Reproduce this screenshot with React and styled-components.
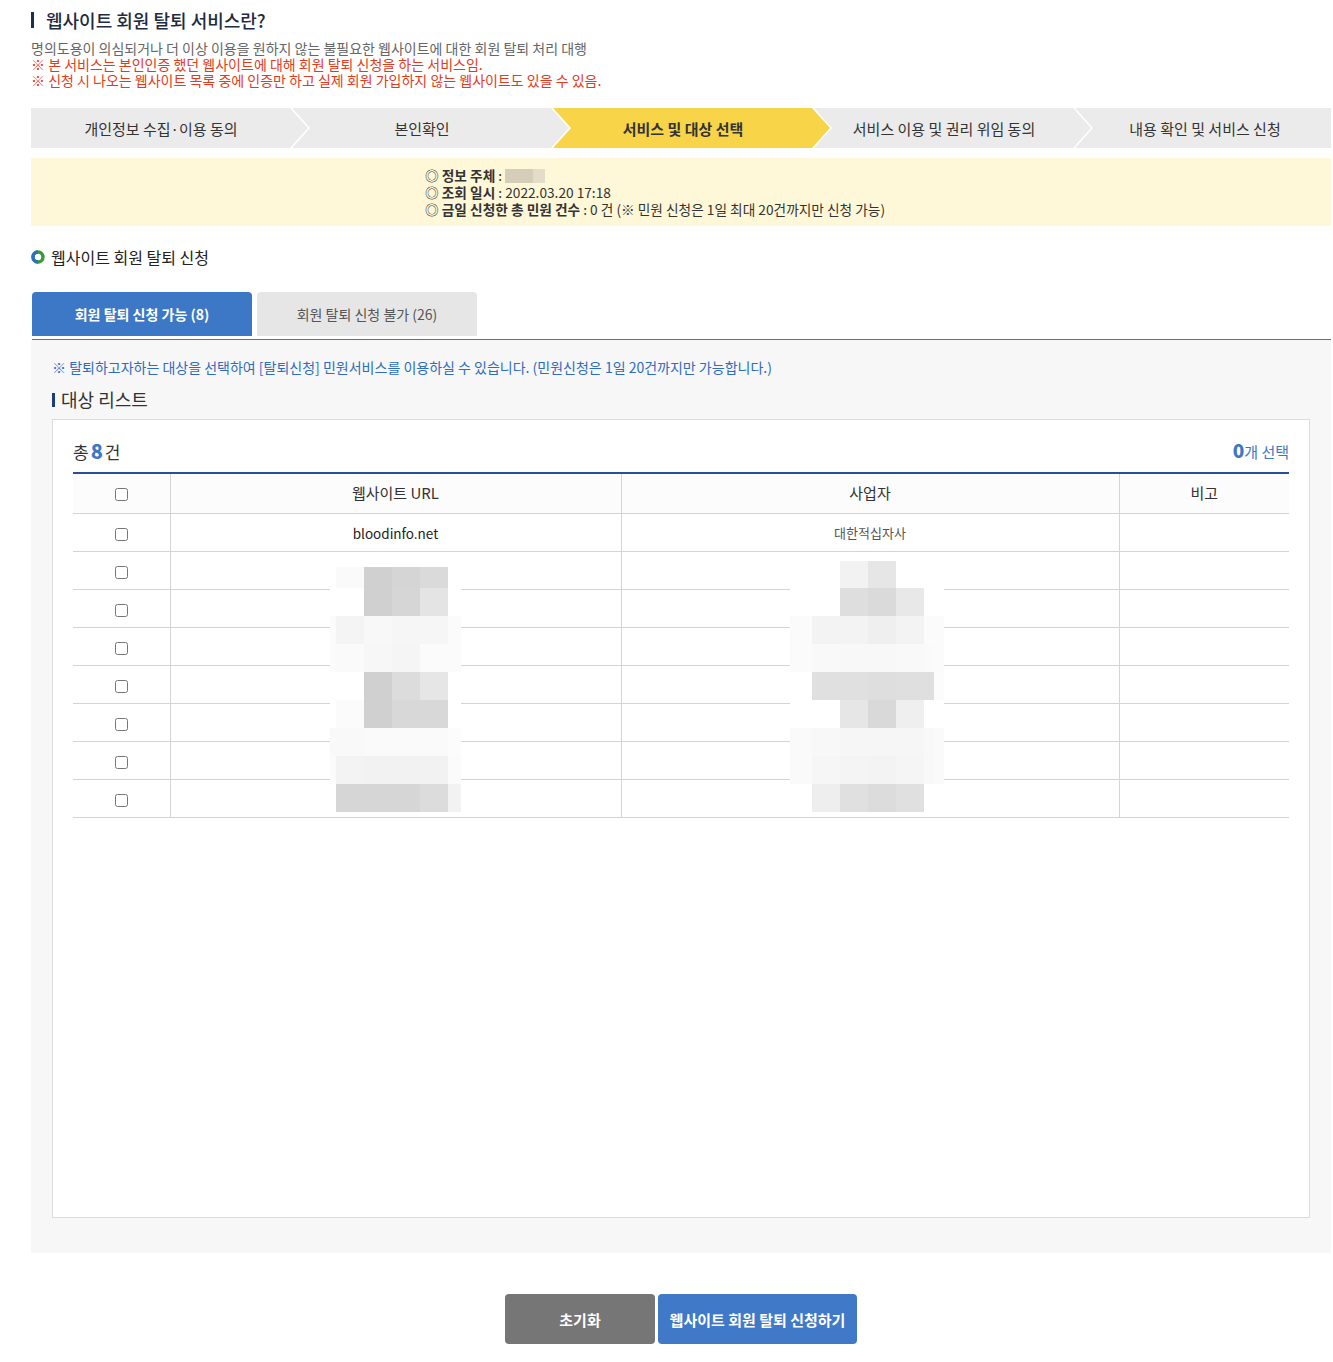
import React from "react";
import styled, { createGlobalStyle, css } from "styled-components";

const GlobalStyle = createGlobalStyle`
  body {
    margin: 0;
    background: #fff;
    font-family: "Noto Sans CJK KR", "Noto Sans", sans-serif;
    color: #333;
  }
`;

const Page = styled.div`
  width: 1300px;
  padding: 9px 0 40px 31px;
`;

const Title = styled.h2`
  display: flex;
  align-items: center;
  gap: 12px;
  margin: 0 0 9px;
  font-size: 18px;
  line-height: 22px;
  font-weight: 500;
  color: #1f2a44;

  &::before {
    content: "";
    width: 3px;
    height: 16px;
    background: #1f2d4d;
  }
`;

const Desc = styled.p`
  margin: 0;
  font-size: 14px;
  line-height: 16px;
  color: ${(p) => (p.$red ? "#e33a1c" : "#666")};
`;

const Steps = styled.div`
  display: flex;
  margin-top: 20px;
  height: 40px;
  overflow: hidden;
`;

const Step = styled.div`
  flex: 0 0 277px;
  display: flex;
  align-items: center;
  justify-content: center;
  padding-right: 17px;
  box-sizing: border-box;
  margin-left: ${(p) => (p.$first ? "0" : "-16px")};
  font-size: 15px;
  color: #333;
  background: ${(p) => (p.$active ? "#f7d448" : "#ebebeb")};
  font-weight: ${(p) => (p.$active ? 700 : 400)};
  clip-path: ${(p) =>
    p.$first
      ? "polygon(0 0, calc(100% - 18px) 0, 100% 50%, calc(100% - 18px) 100%, 0 100%)"
      : "polygon(0 0, calc(100% - 18px) 0, 100% 50%, calc(100% - 18px) 100%, 0 100%, 18px 50%)"};
`;

const InfoBox = styled.div`
  margin-top: 10px;
  background: #fef7d8;
  padding: 9px 0 8px 394px;
  font-size: 13.7px;
  line-height: 17px;
  color: #333;
`;

const InfoLine = styled.div`
  b {
    font-weight: 600;
  }
`;

const Masked = styled.span`
  display: inline-block;
  vertical-align: -2px;
  width: 40px;
  height: 14px;
  background: linear-gradient(to right, #d5cdb8 0 28px, #e3dcc9 28px 100%);
`;

const SectionTitle = styled.h3`
  display: flex;
  align-items: center;
  gap: 6px;
  margin: 21px 0 0;
  font-size: 16px;
  line-height: 20px;
  font-weight: 400;
  color: #222;
`;

const TabBar = styled.div`
  display: flex;
  gap: 5px;
  margin: 25px 0 0 1px;
  padding-bottom: 3px;
  border-bottom: 1px solid #3d78c6;
`;

const Tab = styled.div`
  width: 220px;
  height: 44px;
  display: flex;
  align-items: center;
  justify-content: center;
  border-radius: 4px 4px 0 0;
  font-size: 14px;
  ${(p) =>
    p.$active
      ? css`
          background: #3d78c6;
          color: #fff;
          font-weight: 700;
        `
      : css`
          background: #e6e6e6;
          color: #555;
        `}
`;

const Panel = styled.div`
  background: #f7f7f7;
  padding: 18px 21px 35px;
`;

const Notice = styled.p`
  margin: 0;
  font-size: 14px;
  line-height: 18px;
  color: #2e6cc0;
`;

const ListTitle = styled.h4`
  display: flex;
  align-items: center;
  gap: 6px;
  margin: 12px 0 9px;
  font-size: 18px;
  line-height: 22px;
  font-weight: 400;
  color: #333;

  &::before {
    content: "";
    width: 3px;
    height: 14px;
    margin-top: 2px;
    background: #1e3d7a;
  }
`;

const Card = styled.div`
  box-sizing: border-box;
  height: 799px;
  background: #fff;
  border: 1px solid #dcdcdc;
  padding: 0 20px;
`;

const CountRow = styled.div`
  display: flex;
  justify-content: space-between;
  align-items: center;
  height: 22px;
  padding: 20px 0 10px;
`;

const Count = styled.span`
  font-size: 17px;
  line-height: 22px;
  color: #333;
  strong {
    font-size: 20px;
    font-weight: 800;
    color: #3d78c6;
    margin: 0 2px;
  }
`;

const Selected = styled.span`
  font-size: 15px;
  line-height: 22px;
  color: #3d78c6;
  strong {
    font-size: 19px;
    font-weight: 800;
  }
`;

const TableWrap = styled.div`
  position: relative;
`;

const Table = styled.table`
  width: 100%;
  border-collapse: collapse;
  border-top: 2px solid #294f97;
  table-layout: fixed;
`;

const Th = styled.th`
  height: 37px;
  padding: 0 0 2px;
  background: #fcfcfc;
  font-size: 15px;
  font-weight: 400;
  color: #333;
  border-bottom: 1px solid #d4d4d4;
  border-left: ${(p) => (p.$first ? "none" : "1px solid #d4d4d4")};
`;

const Td = styled.td`
  height: 37px;
  padding: 0;
  text-align: center;
  color: ${(p) => (p.$small ? "#555" : "#222")};
  font-size: ${(p) => (p.$small ? "13px" : "13.5px")};
  border-bottom: 1px solid #d4d4d4;
  border-left: ${(p) => (p.$first ? "none" : "1px solid #d4d4d4")};
`;

const Check = styled.input.attrs({ type: "checkbox" })`
  margin: 0;
  width: 13px;
  height: 13px;
  vertical-align: middle;
`;

const Mosaic = styled.div`
  position: absolute;
  display: grid;
  grid-template-columns: ${(p) => p.$cols};
  grid-template-rows: ${(p) => p.$rows};
`;

const Buttons = styled.div`
  display: flex;
  justify-content: center;
  gap: 3px;
  margin-top: 41px;
`;

const Button = styled.button`
  height: 50px;
  width: ${(p) => p.$w}px;
  border: none;
  border-radius: 4px;
  background: ${(p) => (p.$primary ? "#3f79c7" : "#767676")};
  color: #fff;
  font-family: inherit;
  font-size: 15px;
  font-weight: 700;
  cursor: pointer;
`;

const steps = [
  "개인정보 수집·이용 동의",
  "본인확인",
  "서비스 및 대상 선택",
  "서비스 이용 및 권리 위임 동의",
  "내용 확인 및 서비스 신청",
];

const W = "#fff";
const leftMosaic = [
  [W, "#fafafa", "#d0d0d0", "#d5d5d5", "#dadada", W],
  [W, W, "#d0d0d0", "#d6d6d6", "#e4e4e4", W],
  ["#fbfbfb", "#f4f4f4", "#f8f8f8", "#f6f6f6", "#f6f6f6", "#fbfbfb"],
  ["#fbfbfb", "#fafafa", "#f7f7f7", "#f5f5f5", "#fbfbfb", "#fbfbfb"],
  [W, W, "#d0d0d0", "#dcdcdc", "#e6e6e6", W],
  [W, "#fbfbfb", "#d0d0d0", "#d8d8d8", "#d8d8d8", W],
  ["#f9f9f9", "#f9f9f9", "#fafafa", "#fafafa", "#fafafa", "#fcfcfc"],
  ["#fbfbfb", "#f3f3f3", "#f2f2f2", "#f2f2f2", "#f2f2f2", "#fbfbfb"],
  [W, "#d6d6d6", "#d6d6d6", "#d6d6d6", "#dcdcdc", "#f2f2f2"],
];

const T = "transparent";
const rightMosaic = [
  [T, T, "#f2f2f2", "#e6e6e6", T, T, T],
  [W, W, "#dedede", "#dadada", "#e8e8e8", W, W],
  ["#fbfbfb", "#f3f3f3", "#f3f3f3", "#efefef", "#f3f3f3", "#fbfbfb", "#fbfbfb"],
  ["#fbfbfb", "#f9f9f9", "#f8f8f8", "#f8f8f8", "#f9f9f9", "#fafafa", "#fbfbfb"],
  [W, "#e0e0e0", "#e0e0e0", "#dedede", "#dfdfdf", "#dfdfdf", "#fcfcfc"],
  [W, W, "#e6e6e6", "#d9d9d9", "#efefef", W, W],
  ["#fafafa", "#f8f8f8", "#f6f6f6", "#f6f6f6", "#f6f6f6", "#f8f8f8", "#fafafa"],
  ["#fafafa", "#f6f6f6", "#f4f4f4", "#f3f3f3", "#f5f5f5", "#f8f8f8", "#fafafa"],
  [W, "#eeeeee", "#e0e0e0", "#dcdcdc", "#e0e0e0", W, W],
];

const MosaicBlock = ({ data, cols, rows, left, top }) => (
  <Mosaic $cols={cols} $rows={rows} style={{ left, top }}>
    {data.flat().map((c, i) => (
      <div key={i} style={{ background: c }} />
    ))}
  </Mosaic>
);

const RingIcon = () => (
  <svg width="14" height="14" viewBox="0 0 14 14">
    <circle cx="7" cy="7" r="5" fill="none" stroke="#3a9a3a" strokeWidth="3.4" />
    <path d="M7 2 A5 5 0 0 0 7 12" fill="none" stroke="#2f6fc2" strokeWidth="3.4" />
  </svg>
);

export default function App() {
  const rows = [
    { url: "bloodinfo.net", owner: "대한적십자사" },
    ...Array.from({ length: 7 }, () => ({ url: "", owner: "" })),
  ];

  return (
    <>
      <GlobalStyle />
      <Page>
        <Title>웹사이트 회원 탈퇴 서비스란?</Title>
        <Desc>명의도용이 의심되거나 더 이상 이용을 원하지 않는 불필요한 웹사이트에 대한 회원 탈퇴 처리 대행</Desc>
        <Desc $red>※ 본 서비스는 본인인증 했던 웹사이트에 대해 회원 탈퇴 신청을 하는 서비스임.</Desc>
        <Desc $red>※ 신청 시 나오는 웹사이트 목록 중에 인증만 하고 실제 회원 가입하지 않는 웹사이트도 있을 수 있음.</Desc>

        <Steps>
          {steps.map((s, i) => (
            <Step key={s} $first={i === 0} $active={i === 2}>
              {s}
            </Step>
          ))}
        </Steps>

        <InfoBox>
          <InfoLine>
            ◎ <b>정보 주체</b> : <Masked />
          </InfoLine>
          <InfoLine>
            ◎ <b>조회 일시</b> : 2022.03.20 17:18
          </InfoLine>
          <InfoLine>
            ◎ <b>금일 신청한 총 민원 건수</b> : 0 건 (※ 민원 신청은 1일 최대 20건까지만 신청 가능)
          </InfoLine>
        </InfoBox>

        <SectionTitle>
          <RingIcon />
          웹사이트 회원 탈퇴 신청
        </SectionTitle>

        <TabBar>
          <Tab $active>회원 탈퇴 신청 가능 (8)</Tab>
          <Tab>회원 탈퇴 신청 불가 (26)</Tab>
        </TabBar>

        <Panel>
          <Notice>
            ※ 탈퇴하고자하는 대상을 선택하여 [탈퇴신청] 민원서비스를 이용하실 수 있습니다. (민원신청은 1일 20건까지만 가능합니다.)
          </Notice>
          <ListTitle>대상 리스트</ListTitle>
          <Card>
            <CountRow>
              <Count>
                총<strong>8</strong>건
              </Count>
              <Selected>
                <strong>0</strong>개 선택
              </Selected>
            </CountRow>
            <TableWrap>
              <Table>
                <colgroup>
                  <col style={{ width: 97 }} />
                  <col style={{ width: 451 }} />
                  <col style={{ width: 498 }} />
                  <col />
                </colgroup>
                <thead>
                  <tr>
                    <Th $first>
                      <Check />
                    </Th>
                    <Th>웹사이트 URL</Th>
                    <Th>사업자</Th>
                    <Th>비고</Th>
                  </tr>
                </thead>
                <tbody>
                  {rows.map((r, i) => (
                    <tr key={i}>
                      <Td $first>
                        <Check />
                      </Td>
                      <Td>{r.url}</Td>
                      <Td $small>{r.owner}</Td>
                      <Td />
                    </tr>
                  ))}
                </tbody>
              </Table>
              <MosaicBlock
                data={leftMosaic}
                cols="6px 28px 28px 28px 28px 13px"
                rows="21px repeat(8, 28px)"
                left={257}
                top={95}
              />
              <MosaicBlock
                data={rightMosaic}
                cols="22px 28px 28px 28px 28px 10px 10px"
                rows="27px repeat(8, 28px)"
                left={717}
                top={89}
              />
            </TableWrap>
          </Card>
        </Panel>

        <Buttons>
          <Button $w={150}>초기화</Button>
          <Button $w={199} $primary>
            웹사이트 회원 탈퇴 신청하기
          </Button>
        </Buttons>
      </Page>
    </>
  );
}
